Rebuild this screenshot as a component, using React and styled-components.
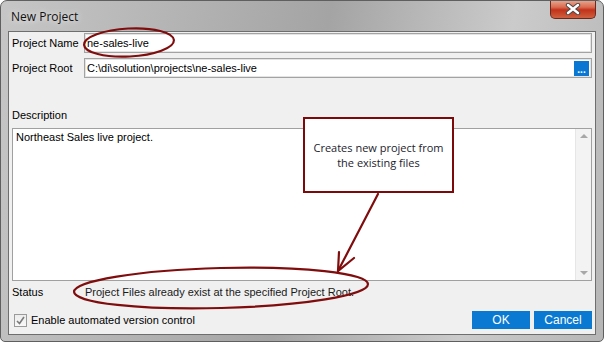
import React from "react"
import styled, {createGlobalStyle} from "styled-components"

const GlobalStyle = createGlobalStyle`
    html, body {
        margin: 0;
        padding: 0;
        background: #ffffff;
    }
    body {
        font-family: "Liberation Sans", Arial, sans-serif;
        font-size: 11px;
        color: #000;
    }
`

const Window = styled.div`
    position: relative;
    width: 604px;
    height: 342px;
    box-sizing: border-box;
    border: 1px solid #5f5f5f;
    border-radius: 7px 7px 5px 5px;
    background: linear-gradient(100deg, #c6c6c6 0%, #b5b5b5 25%, #a4a4a4 50%, #cbcbcb 78%, #b6b6b6 100%);
    display: flex;
    flex-direction: column;
    overflow: hidden;
`

const TitleBar = styled.div`
    height: 30px;
    display: flex;
    align-items: flex-start;
    justify-content: space-between;
    padding-left: 10px;
`

const Title = styled.span`
    font-family: "Open Sans", "Noto Sans", sans-serif;
    font-size: 12px;
    line-height: 31px;
    color: #111;
    text-shadow: 0 0 6px rgba(255, 255, 255, 0.9);
`

const CloseButton = styled.div`
    width: 46px;
    height: 19px;
    margin-right: 7px;
    margin-top: -1px;
    box-sizing: border-box;
    border: 1px solid #6b2a20;
    border-top: none;
    border-radius: 0 0 5px 5px;
    background: linear-gradient(#e9ab95 0%, #da6b50 40%, #c2321b 55%, #d0603f 100%);
    display: flex;
    align-items: center;
    justify-content: center;
`

const Client = styled.div`
    margin: 0 7px 0 7px;
    height: 304px;
    box-sizing: border-box;
    border: 1px solid #6e6e6e;
    background: #f0f0f0;
    padding: 1px 3px 0 3px;
    display: flex;
    flex-direction: column;
`

const FieldRow = styled.div`
    display: flex;
    align-items: center;
    height: 20px;
    margin-top: ${({$gap}) => $gap || 0}px;
`

const Label = styled.span`
    width: 72px;
    flex: none;
    white-space: nowrap;
`

const TextBox = styled.div`
    position: relative;
    flex: 1;
    height: 20px;
    box-sizing: border-box;
    border: 1px solid #a3a3a3;
    box-shadow: inset 0 0 0 1px #e4e4e4;
    background: #fff;
    padding-left: 2px;
    display: flex;
    align-items: center;
`

const BrowseButton = styled.div`
    position: absolute;
    right: 2px;
    top: 2px;
    width: 15px;
    height: 15px;
    background: #0a78d2;
    color: #fff;
    font-size: 10px;
    font-weight: bold;
    line-height: 17px;
    text-align: center;
`

const SectionLabel = styled.div`
    line-height: 14px;
    margin-top: ${({$gap}) => $gap}px;
`

const TextArea = styled.div`
    position: relative;
    margin-top: 6px;
    height: 153px;
    box-sizing: border-box;
    border: 1px solid #a0a0a0;
    background: #fff;
    padding: 2px 0 0 3px;
`

const ScrollBar = styled.div`
    position: absolute;
    right: 0;
    top: 0;
    bottom: 0;
    width: 16px;
    background: #f3f3f3;
    border-left: 1px solid #e6e6e6;
    display: flex;
    flex-direction: column;
    justify-content: space-between;
    align-items: center;
    padding: 5px 0;
    box-sizing: border-box;
`

const Arrow = styled.div`
    width: 0;
    height: 0;
    border-left: 4px solid transparent;
    border-right: 4px solid transparent;
    ${({$down}) => $down ? "border-top: 4px solid #a8a8a8;" : "border-bottom: 4px solid #a8a8a8;"}
`

const StatusRow = styled.div`
    display: flex;
    line-height: 14px;
    margin-top: 4px;
`

const StatusText = styled.span`
    padding-left: 1px;
    color: #1a1a1a;
`

const BottomRow = styled.div`
    display: flex;
    align-items: center;
    justify-content: space-between;
    margin-top: 12px;
`

const CheckLabel = styled.label`
    display: flex;
    align-items: center;
    gap: 4px;
    padding-left: 2px;
`

const CheckBox = styled.span`
    width: 13px;
    height: 13px;
    box-sizing: border-box;
    border: 1px solid #9a9a9a;
    background: linear-gradient(#ececec, #f8f8f8);
    display: flex;
    align-items: center;
    justify-content: center;
`

const Buttons = styled.div`
    display: flex;
    gap: 4px;
`

const Button = styled.div`
    width: 58px;
    height: 18px;
    background: #0a79d1;
    color: #fff;
    font-size: 12px;
    line-height: 19px;
    text-align: center;
`

const Callout = styled.div`
    position: absolute;
    left: 302px;
    top: 116px;
    width: 151px;
    height: 76px;
    box-sizing: border-box;
    border: 2px solid #7d0a0a;
    background: #fff;
    padding-top: 21px;
    font-family: "Open Sans", "Noto Sans", sans-serif;
    font-size: 11px;
    line-height: 15px;
    color: #1c1c2c;
    text-align: center;
`

const Annotations = styled.svg`
    position: absolute;
    left: 0;
    top: 0;
    pointer-events: none;
`

const App = () => {
    return (
        <>
            <GlobalStyle/>
            <Window>
                <TitleBar>
                    <Title>New Project</Title>
                    <CloseButton>
                        <svg width="16" height="12" viewBox="0 0 16 12">
                            <path d="M3 2 L13 10 M13 2 L3 10" stroke="#4a4a4a" strokeWidth="4.4" strokeLinecap="round"/>
                            <path d="M3 2 L13 10 M13 2 L3 10" stroke="#ffffff" strokeWidth="2.4" strokeLinecap="round"/>
                        </svg>
                    </CloseButton>
                </TitleBar>

                <Client>
                    <FieldRow>
                        <Label>Project Name</Label>
                        <TextBox>ne-sales-live</TextBox>
                    </FieldRow>
                    <FieldRow $gap={5}>
                        <Label>Project Root</Label>
                        <TextBox>
                            C:\di\solution\projects\ne-sales-live
                            <BrowseButton>...</BrowseButton>
                        </TextBox>
                    </FieldRow>

                    <SectionLabel $gap={30}>Description</SectionLabel>
                    <TextArea>
                        Northeast Sales live project.
                        <ScrollBar>
                            <Arrow/>
                            <Arrow $down/>
                        </ScrollBar>
                    </TextArea>

                    <StatusRow>
                        <Label>Status</Label>
                        <StatusText>Project Files already exist at the specified Project Root.</StatusText>
                    </StatusRow>

                    <BottomRow>
                        <CheckLabel>
                            <CheckBox>
                                <svg width="9" height="9" viewBox="0 0 9 9">
                                    <path d="M1 5 L3.5 7.5 L8 1" fill="none" stroke="#7a7a7a" strokeWidth="1.6"/>
                                </svg>
                            </CheckBox>
                            Enable automated version control
                        </CheckLabel>
                        <Buttons>
                            <Button>OK</Button>
                            <Button>Cancel</Button>
                        </Buttons>
                    </BottomRow>
                </Client>

                <Callout>
                    Creates new project from<br/>the existing files
                </Callout>

                <Annotations width="604" height="342">
                    <g fill="none" stroke="#800d0d" strokeWidth="2.2" strokeLinecap="round">
                        <ellipse cx="128" cy="41.5" rx="45" ry="14" transform="rotate(-3 128 41.5)"/>
                        <ellipse cx="220" cy="287" rx="147" ry="20" transform="rotate(-1.5 220 287)"/>
                        <path d="M377 193 L337 270"/>
                        <path d="M338 251 L337 270 L353 257"/>
                    </g>
                </Annotations>
            </Window>
        </>
    )
}

export default App
